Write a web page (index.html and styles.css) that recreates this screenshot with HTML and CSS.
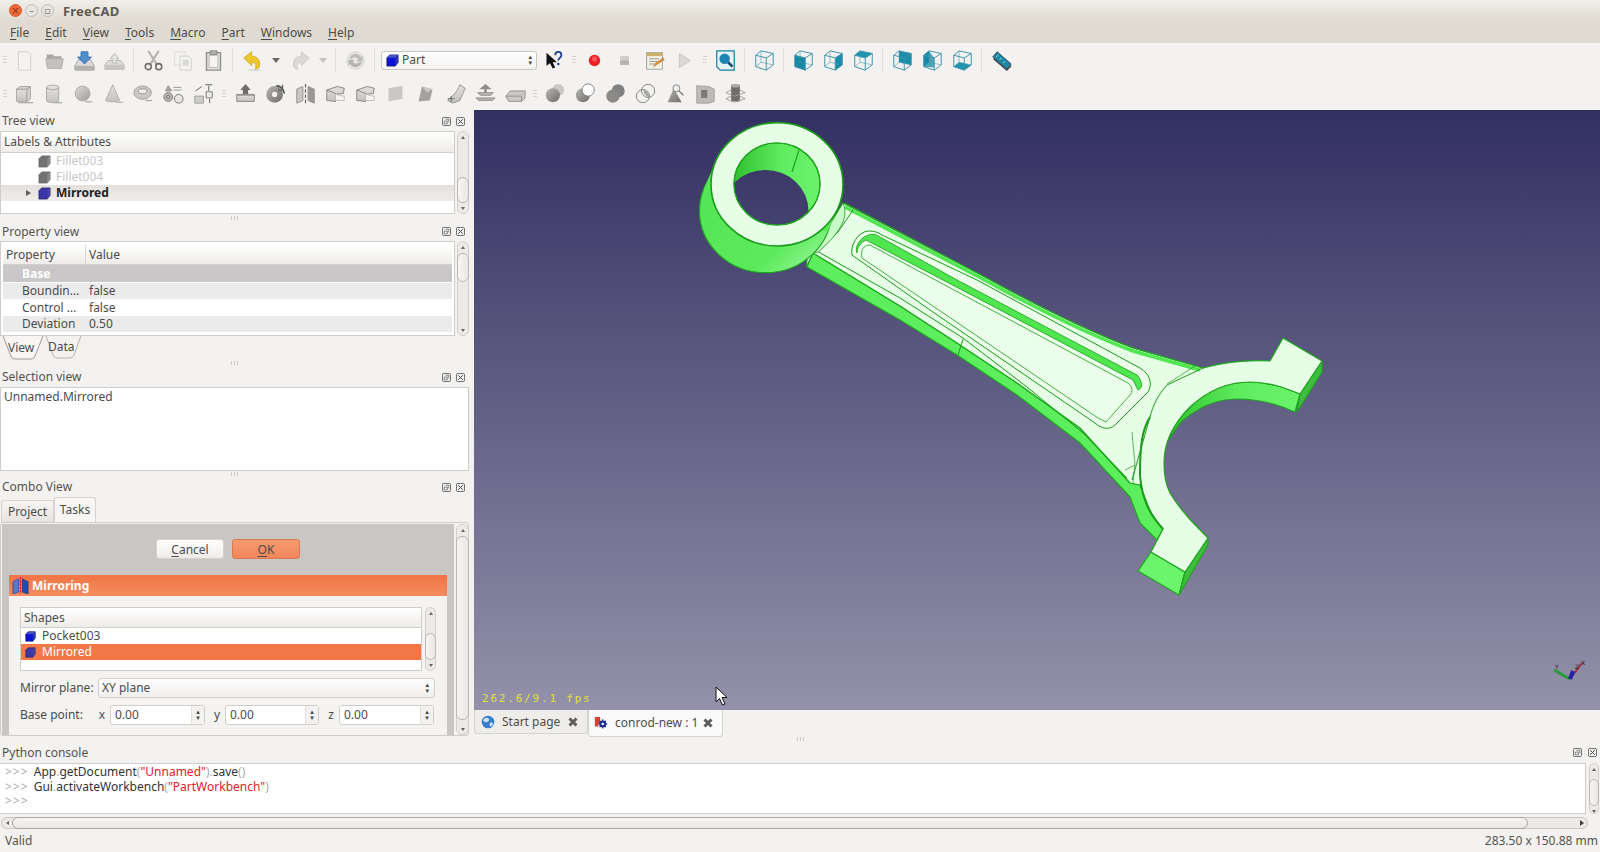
FILE: index.html
```html
<!DOCTYPE html>
<html lang="en">
<head>
<meta charset="utf-8">
<title>FreeCAD</title>
<link rel="stylesheet" href="styles.css">
</head>
<body>
<svg class="defs" aria-hidden="true">
  <defs>
    <linearGradient id="gface" x1="0" y1="0" x2="0" y2="1"><stop offset="0" stop-color="#e2e1de"/><stop offset="1" stop-color="#c3c2bf"/></linearGradient>
    <linearGradient id="gball" x1="0" y1="0" x2="1" y2="1"><stop offset="0" stop-color="#dcdbd8"/><stop offset="1" stop-color="#9e9d9a"/></linearGradient>
    <linearGradient id="gdark" x1="0" y1="0" x2="1" y2="1"><stop offset="0" stop-color="#b5b4b1"/><stop offset="1" stop-color="#6f6e6c"/></linearGradient>
    <symbol id="new" viewBox="0 0 24 24"><path d="M5 2h11l3 3v18H5z" fill="#f4f3f1" stroke="#cfcecb"/></symbol>
    <symbol id="open" viewBox="0 0 24 24"><path d="M3 5h7l2 2h8v3H3z" fill="#a9a8a5"/><path d="M2 10h20l-2 11H4z" fill="#c3c2bf" stroke="#adaca9"/></symbol>
    <symbol id="save" viewBox="0 0 24 24"><path d="M5 11h14l4 7v5H1v-5z" fill="#dcdbd8" stroke="#9f9e9b"/><path d="M1 18h22v5H1z" fill="#b3b2af"/><path d="M8 2h8v6h4l-8 8-8-8h4z" fill="#4f8dcc" stroke="#3a70ac"/></symbol>
    <symbol id="saveas" viewBox="0 0 24 24"><path d="M5 12h14l4 5v5H1v-5z" fill="#dddcd9" stroke="#b3b2af"/><path d="M2 17h20v5H2z" fill="#c7c6c3"/><path d="M12 4l5 6h-3v5h-4v-5H7z" fill="#e8e7e4" stroke="#b3b2af"/></symbol>
    <symbol id="cut" viewBox="0 0 24 24"><path d="M6 1l10 16M18 1L8 17" stroke="#b5b4b1" stroke-width="2.400" fill="none"/><circle cx="6" cy="19" r="3.400" fill="none" stroke="#6f6e6c" stroke-width="1.800"/><circle cx="18" cy="19" r="3.400" fill="none" stroke="#6f6e6c" stroke-width="1.800"/></symbol>
    <symbol id="copy" viewBox="0 0 24 24"><path d="M2 2h12v15H2z" fill="#f3f2f0" stroke="#dad9d6"/><path d="M8 7h10l3 3v13H8z" fill="#f3f2f0" stroke="#cfcecb"/><path d="M11 11h7v7h-7z" fill="#d9d8d5"/></symbol>
    <symbol id="paste" viewBox="0 0 24 24"><path d="M4 3h16v20H4z" fill="#e3e2df" stroke="#8f8e8b" stroke-width="1.600"/><path d="M7 6h10v14H7z" fill="#f6f5f3" stroke="#b5b4b1"/><path d="M8 1h8v4H8z" fill="#b5b4b1" stroke="#7f7e7b"/></symbol>
    <symbol id="undo" viewBox="0 0 24 24"><path d="M2 9l9-7v5c7 0 10 5 9 12-1 2-3 3-5 3 2-4 1-8-4-8v4z" fill="#ecc82f" stroke="#d4a91a"/><ellipse cx="14" cy="23" rx="8" ry="1" fill="#d6d5d2"/></symbol>
    <symbol id="redo" viewBox="0 0 24 24"><path d="M22 9l-9-7v5C6 7 3 12 4 19c1 2 3 3 5 3-2-4-1-8 4-8v4z" fill="#dad9d6" stroke="#cbcac7"/></symbol>
    <symbol id="refresh" viewBox="0 0 24 24"><circle cx="12" cy="12" r="10" fill="#e9e8e5" stroke="#d4d3d0"/><path d="M5 10a7 7 0 0 1 13-2l2-2v7h-7l2-2a4 4 0 0 0-7-1z" fill="#bdbcb9"/><path d="M19 14a7 7 0 0 1-13 2l-2 2v-7h7l-2 2a4 4 0 0 0 7 1z" fill="#b5b4b1"/></symbol>
    <symbol id="what" viewBox="0 0 24 24"><path d="M4 3v15l4-3 3 6 3-1-3-6h5z" fill="#111"/><path d="M14 6c0-5 7-5 7 0 0 3-3.500 3-3.500 6" fill="none" stroke="#1c3d8f" stroke-width="2"/><circle cx="17.500" cy="16" r="1.400" fill="#1c3d8f"/></symbol>
    <symbol id="rec" viewBox="0 0 24 24"><circle cx="12" cy="12" r="6.500" fill="#ec2027"/><circle cx="12" cy="10" r="3" fill="#f55"/></symbol>
    <symbol id="stop" viewBox="0 0 24 24"><path d="M7 7h10v10H7z" fill="#cfcecb"/><path d="M7 12h10v5H7z" fill="#b5b4b1"/></symbol>
    <symbol id="macro" viewBox="0 0 24 24"><path d="M3 3h18v19H3z" fill="#f3f1e6" stroke="#9a9995"/><path d="M3 3h18v4H3z" fill="#c9b26a"/><path d="M6 10h11M6 13h9M6 16h6" stroke="#8f8e8b"/><path d="M11 19l2-4 9-6 1 2-9 6z" fill="#e09530" stroke="#a66a1d" stroke-width=".6"/></symbol>
    <symbol id="play" viewBox="0 0 24 24"><path d="M6 4l13 8-13 8z" fill="#d9d8d5" stroke="#c6c5c2"/></symbol>
    <symbol id="fit" viewBox="0 0 24 24"><path d="M2 1h20v22H6l-4-4z" fill="#e8f3f6" stroke="#1a7f9c" stroke-width="1.400"/><circle cx="11" cy="10" r="6" fill="#1d86b3"/><path d="M15 14l5 5" stroke="#17506e" stroke-width="3"/></symbol>
    <symbol id="wire" viewBox="0 0 24 24"><path d="M2 6L8 1 22 4V17L14 23 2 19ZM2 6L14 9 22 4M14 9V23" fill="none" stroke="#3f93a9" stroke-width="1.100"/><path d="M8 1V14L2 19M8 14L22 17" fill="none" stroke="#3f93a9" stroke-width=".6"/></symbol>
    <symbol id="viso" viewBox="0 0 24 24"><use href="#wire"/></symbol>
    <symbol id="vfront" viewBox="0 0 24 24"><path d="M2 6L14 9V23L2 19Z" fill="#1688a6"/><use href="#wire"/></symbol>
    <symbol id="vright" viewBox="0 0 24 24"><path d="M14 9L22 4V17L14 23Z" fill="#1c8eab"/><use href="#wire"/></symbol>
    <symbol id="vtop" viewBox="0 0 24 24"><path d="M2 6L8 1 22 4 14 9Z" fill="#1f95b2"/><use href="#wire"/></symbol>
    <symbol id="vrear" viewBox="0 0 24 24"><path d="M8 1L22 4V17L8 14Z" fill="#1c8eab"/><use href="#wire"/></symbol>
    <symbol id="vleft" viewBox="0 0 24 24"><path d="M2 6L8 1V14L2 19Z" fill="#1688a6"/><path d="M2 6L8 1 14 9V20L2 19Z" fill="#1688a6" opacity=".75"/><use href="#wire"/></symbol>
    <symbol id="vbottom" viewBox="0 0 24 24"><path d="M2 19L8 14 22 17 14 23Z" fill="#1f95b2"/><use href="#wire"/></symbol>
    <symbol id="measure" viewBox="0 0 24 24"><path d="M2 8l5-6 16 14-5 6z" fill="#1d87a6" stroke="#2a4450"/><path d="M6 8l2-2M10 11l2-2M14 15l2-2" stroke="#cfeaf2"/><path d="M3 10l15 13 5-5" fill="none" stroke="#3a3f42" stroke-width="1.400"/></symbol>
    <symbol id="pbox" viewBox="0 0 24 24"><path d="M4 7h12v14H4z" fill="url(#gface)" stroke="#a5a4a1"/><path d="M4 7l4-3h12l-4 3zM16 7l4-3v14l-4 3z" fill="#d2d1ce" stroke="#a5a4a1"/><path d="M6 22.500h17" stroke="#a9a8a5" stroke-width="1.400"/></symbol>
    <symbol id="pcyl" viewBox="0 0 24 24"><path d="M4 5v15c0 3 14 3 14 0V5z" fill="url(#gface)" stroke="#a5a4a1"/><ellipse cx="11" cy="5" rx="7" ry="2.500" fill="#e2e1de" stroke="#a5a4a1"/><path d="M12 22.500h10" stroke="#a9a8a5" stroke-width="1.400"/></symbol>
    <symbol id="psph" viewBox="0 0 24 24"><circle cx="11" cy="12" r="8.500" fill="url(#gball)" stroke="#a9a8a5"/><path d="M14 21.500h8" stroke="#a9a8a5" stroke-width="1.400"/></symbol>
    <symbol id="pcone" viewBox="0 0 24 24"><path d="M11 2L3 20c2 2 14 2 16 0z" fill="url(#gface)" stroke="#a9a8a5"/><path d="M15 22h8" stroke="#b5b4b1" stroke-width="1.400"/></symbol>
    <symbol id="ptor" viewBox="0 0 24 24"><ellipse cx="11" cy="11" rx="10" ry="7.500" fill="#c9c8c5" stroke="#9a9996"/><ellipse cx="11" cy="9.500" rx="5" ry="2.800" fill="#eeedea" stroke="#8f8e8b"/><path d="M14 20h8" stroke="#a9a8a5" stroke-width="1.400"/></symbol>
    <symbol id="pprim" viewBox="0 0 24 24"><circle cx="6" cy="16" r="5" fill="#bdbcb9" stroke="#6f6e6c"/><circle cx="6" cy="16" r="2" fill="none" stroke="#6f6e6c"/><circle cx="18" cy="18" r="5" fill="#e6e5e2" stroke="#6f6e6c"/><path d="M6 3l-3 6h7zM12 5h9M12 8h9" fill="#a9a8a5" stroke="#8f8e8b"/></symbol>
    <symbol id="pbuild" viewBox="0 0 24 24"><path d="M2 15h10v8H2z" fill="#cfcecb" stroke="#9a9996"/><path d="M15 10h7v7h-7z" fill="#eeedea" stroke="#6f6e6c"/><path d="M3 9l7-5M14 2h8M18 3v6M19 18v5" stroke="#555" fill="none"/></symbol>
    <symbol id="pext" viewBox="0 0 24 24"><path d="M12 1l6 7h-3v5H9V8H6z" fill="#6f6e6c"/><path d="M2 13h20v8H2z" fill="url(#gface)" stroke="#7f7e7b"/><path d="M1 14h22" stroke="#8f8e8b"/></symbol>
    <symbol id="prev" viewBox="0 0 24 24"><circle cx="11" cy="13" r="9.500" fill="url(#gdark)"/><circle cx="11" cy="13" r="3" fill="#f3f2f0"/><path d="M13 3a10 10 0 0 1 9 9" fill="none" stroke="#555" stroke-width="2"/><path d="M20 2v6h-5" fill="none" stroke="#555" stroke-width="1.400"/></symbol>
    <symbol id="pmir" viewBox="0 0 24 24"><path d="M2 7l7-3v16l-7 3z" fill="#c9c8c5" stroke="#8f8e8b"/><path d="M22 7l-7-3v16l7 3z" fill="#9a9996" stroke="#8f8e8b"/><path d="M12 1v23" stroke="#6f6e6c" stroke-dasharray="4 2" stroke-width="1.400"/></symbol>
    <symbol id="pfil" viewBox="0 0 24 24"><path d="M2 8l12-4 8 2-1 6-9 1v8L2 20z" fill="url(#gface)" stroke="#7f7e7b"/><path d="M2 8l10 4v9" fill="none" stroke="#7f7e7b"/><path d="M12 13c3 0 6 2 10 2v5H12z" fill="#f3f2f0" stroke="#bdbcb9"/></symbol>
    <symbol id="pface" viewBox="0 0 24 24"><path d="M4 6l16-3v15L4 21z" fill="#c9c8c5"/></symbol>
    <symbol id="pface2" viewBox="0 0 24 24"><path d="M8 4l12 3-3 13-13 1z" fill="#a3a2a0"/><path d="M8 4l12 3-6 4z" fill="#cbcac7"/></symbol>
    <symbol id="psweep" viewBox="0 0 24 24"><path d="M17 2l6 4-6 14-8 3-6-3 6-6c4-3 6-7 8-12z" fill="url(#gface)" stroke="#8f8e8b"/><path d="M3 18h8M7 15v7" stroke="#666"/></symbol>
    <symbol id="ploft" viewBox="0 0 24 24"><path d="M12 1l7 6H5z" fill="#8f8e8b"/><path d="M3 11h18l-3 3H6zM1 17h22l-3 3H4z" fill="#b5b4b1" stroke="#8f8e8b"/><path d="M12 7v4" stroke="#8f8e8b" stroke-width="3"/></symbol>
    <symbol id="pcube2" viewBox="0 0 24 24"><path d="M1 15l5-6h17v8l-4 4H4z" fill="#c9c8c5" stroke="#8f8e8b"/><path d="M1 15h18v6" fill="none" stroke="#8f8e8b"/></symbol>
    <symbol id="bcut" viewBox="0 0 24 24"><circle cx="15" cy="8" r="7" fill="#c9c8c5"/><circle cx="9" cy="14" r="8" fill="url(#gdark)"/></symbol>
    <symbol id="bfuse" viewBox="0 0 24 24"><circle cx="9" cy="14" r="8" fill="url(#gdark)"/><circle cx="15" cy="8" r="7" fill="#fff" stroke="#777"/></symbol>
    <symbol id="bcom" viewBox="0 0 24 24"><circle cx="15" cy="9" r="7.500" fill="#818080"/><circle cx="9" cy="15" r="7.500" fill="#8b8a88"/></symbol>
    <symbol id="bint" viewBox="0 0 24 24"><circle cx="15" cy="9" r="7.500" fill="none" stroke="#777"/><circle cx="9" cy="15" r="7.500" fill="none" stroke="#777"/><path d="M10 7.500a7.500 7.500 0 0 1 6 9 7.500 7.500 0 0 1-6-9z" fill="#a9a8a5"/></symbol>
    <symbol id="bsec" viewBox="0 0 24 24"><path d="M10 6L3 22h16z" fill="url(#gdark)"/><circle cx="13" cy="6" r="4" fill="#eee" stroke="#777"/><path d="M16 9l5 5" stroke="#777" stroke-width="1.500"/></symbol>
    <symbol id="bthick" viewBox="0 0 24 24"><path d="M2 3l14 1 6 3v14l-6 2H2z" fill="#bdbcb9" stroke="#a09f9c"/><path d="M7 8h7v9H7z" fill="#7a7977"/></symbol>
    <symbol id="bstack" viewBox="0 0 24 24"><path d="M7 2h10v19H7z" fill="#6f6e6c"/><ellipse cx="12" cy="3" rx="5" ry="2" fill="#a9a8a5"/><path d="M1 11l6-3M23 11l-6-3M1 18l6-3M23 18l-6-3M1 11l10 4 12-4M1 18l10 4 12-4" stroke="#9a9996" fill="none"/></symbol>
    <symbol id="cubeblue" viewBox="0 0 14 14"><path d="M1 4l3-3h9v8l-3 4H1z" fill="#0c13d4" stroke="#071067" stroke-width=".8"/><path d="M10 4l3-3v8l-3 4z" fill="#2b33ae"/><path d="M1 4l3-3h9l-3 3z" fill="#4552c6"/></symbol>
    <symbol id="cubepurple" viewBox="0 0 14 14"><path d="M1 4l3-3h9v8l-3 4H1z" fill="#3b35a8" stroke="#28255f" stroke-width=".8"/><path d="M10 4l3-3v8l-3 4z" fill="#4a45a0"/></symbol>
    <symbol id="cubegrey" viewBox="0 0 14 14"><path d="M1 4l3-3h9v8l-3 4H1z" fill="#737373" stroke="#666" stroke-width=".8"/><path d="M10 4l3-3v8l-3 4z" fill="#8a8a8a"/></symbol>
    <symbol id="float" viewBox="0 0 10 10"><rect x=".5" y=".5" width="9" height="9" rx="1.500" fill="none" stroke="#5e5e5e"/><path d="M4 2.500h3.500V6M2.500 4.500h3.500v3h-3.500z" fill="none" stroke="#5e5e5e" stroke-width=".8"/></symbol>
    <symbol id="closex" viewBox="0 0 10 10"><rect x=".5" y=".5" width="9" height="9" rx="1.500" fill="none" stroke="#5e5e5e"/><path d="M2.500 2.500l5 5M7.500 2.500l-5 5" stroke="#444" stroke-width="1.100"/></symbol>
    <symbol id="tabx" viewBox="0 0 12 12"><path d="M2.500 2.500l7 7M9.500 2.500l-7 7" stroke="#5e5d5b" stroke-width="3"/></symbol>
    <symbol id="globe" viewBox="0 0 14 14"><circle cx="7" cy="7" r="6.300" fill="#3a7ecb"/><path d="M3 4c2-2 4-1 5 0S6 8 4 7 2 5 3 4zM9 8c2-1 3 0 3 1s-2 3-3 2 0-2 0-3z" fill="#cfe3f7"/></symbol>
    <symbol id="docgear" viewBox="0 0 16 16"><path d="M1 1h6v7H5v4H1z" fill="#d9412a"/><circle cx="10" cy="9" r="4" fill="#1b2f8f"/><circle cx="10" cy="9" r="1.400" fill="#fff"/><path d="M10 3.800v2M10 12.200v2M4.800 9h2M13.200 9h2M6.400 5.400l1.400 1.400M12.200 11.200l1.400 1.400M13.600 5.400l-1.400 1.400M7.800 11.200l-1.400 1.400" stroke="#1b2f8f" stroke-width="1.300"/></symbol>
    <symbol id="mirrorblue" viewBox="0 0 18 18"><path d="M1 5l6-3v14l-6 2z" fill="#4d7fd6" stroke="#1f3f8f" stroke-width=".7"/><path d="M17 5l-6-3v14l6 2z" fill="#1c4fae" stroke="#13306f" stroke-width=".7"/><path d="M9 0v18" stroke="#e11" stroke-dasharray="2.500 1" stroke-width="1.200"/></symbol>
  </defs>
</svg>

<header class="titlebar">
  <div class="winbtns">
    <span class="winbtn close">×</span>
    <span class="winbtn">–</span>
    <span class="winbtn">▫</span>
  </div>
  <span class="apptitle">FreeCAD</span>
</header>

<nav class="menubar">
  <span><u>F</u>ile</span><span><u>E</u>dit</span><span><u>V</u>iew</span><span><u>T</u>ools</span><span><u>M</u>acro</span><span><u>P</u>art</span><span><u>W</u>indows</span><span><u>H</u>elp</span>
</nav>

<div class="toolbar">
  <i class="grip g9"></i>
  <span class="tb"><svg class="ic"><use href="#new"/></svg></span>
  <span class="tb"><svg class="ic"><use href="#open"/></svg></span>
  <span class="tb"><svg class="ic"><use href="#save"/></svg></span>
  <span class="tb"><svg class="ic"><use href="#saveas"/></svg></span>
  <i class="sep"></i>
  <span class="tb"><svg class="ic"><use href="#cut"/></svg></span>
  <span class="tb"><svg class="ic"><use href="#copy"/></svg></span>
  <span class="tb"><svg class="ic"><use href="#paste"/></svg></span>
  <i class="sep"></i>
  <span class="tb"><svg class="ic"><use href="#undo"/></svg></span>
  <span class="drop d18"></span>
  <span class="tb"><svg class="ic"><use href="#redo"/></svg></span>
  <span class="drop faint"></span>
  <i class="sep"></i>
  <span class="tb"><svg class="ic"><use href="#refresh"/></svg></span>
  <i class="sep"></i>
  <div class="wbcombo"><svg class="cube"><use href="#cubeblue"/></svg><span>Part</span><span class="updown">▴<br>▾</span></div>
  <span class="tb"><svg class="ic"><use href="#what"/></svg></span>
  <i class="grip g11"></i>
  <span class="tb"><svg class="ic"><use href="#rec"/></svg></span>
  <span class="tb"><svg class="ic"><use href="#stop"/></svg></span>
  <span class="tb"><svg class="ic"><use href="#macro"/></svg></span>
  <span class="tb"><svg class="ic"><use href="#play"/></svg></span>
  <i class="grip g11"></i>
  <span class="tb"><svg class="ic"><use href="#fit"/></svg></span>
  <i class="sep"></i>
  <span class="tb"><svg class="ic"><use href="#viso"/></svg></span>
  <i class="sep"></i>
  <span class="tb"><svg class="ic"><use href="#vfront"/></svg></span>
  <span class="tb"><svg class="ic"><use href="#vright"/></svg></span>
  <span class="tb"><svg class="ic"><use href="#vtop"/></svg></span>
  <i class="sep"></i>
  <span class="tb"><svg class="ic"><use href="#vrear"/></svg></span>
  <span class="tb"><svg class="ic"><use href="#vleft"/></svg></span>
  <span class="tb"><svg class="ic"><use href="#vbottom"/></svg></span>
  <i class="sep"></i>
  <span class="tb"><svg class="ic"><use href="#measure"/></svg></span>
</div>

<div class="toolbar second">
  <i class="grip g8"></i>
  <span class="tb"><svg class="ic"><use href="#pbox"/></svg></span>
  <span class="tb"><svg class="ic"><use href="#pcyl"/></svg></span>
  <span class="tb"><svg class="ic"><use href="#psph"/></svg></span>
  <span class="tb"><svg class="ic"><use href="#pcone"/></svg></span>
  <span class="tb"><svg class="ic"><use href="#ptor"/></svg></span>
  <span class="tb"><svg class="ic"><use href="#pprim"/></svg></span>
  <span class="tb"><svg class="ic"><use href="#pbuild"/></svg></span>
  <i class="grip g12"></i>
  <span class="tb"><svg class="ic"><use href="#pext"/></svg></span>
  <span class="tb"><svg class="ic"><use href="#prev"/></svg></span>
  <span class="tb"><svg class="ic"><use href="#pmir"/></svg></span>
  <span class="tb"><svg class="ic"><use href="#pfil"/></svg></span>
  <span class="tb"><svg class="ic"><use href="#pfil"/></svg></span>
  <span class="tb"><svg class="ic"><use href="#pface"/></svg></span>
  <span class="tb"><svg class="ic"><use href="#pface2"/></svg></span>
  <span class="tb"><svg class="ic"><use href="#psweep"/></svg></span>
  <span class="tb"><svg class="ic"><use href="#ploft"/></svg></span>
  <span class="tb"><svg class="ic"><use href="#pcube2"/></svg></span>
  <i class="grip g10"></i>
  <span class="tb"><svg class="ic"><use href="#bcut"/></svg></span>
  <span class="tb"><svg class="ic"><use href="#bfuse"/></svg></span>
  <span class="tb"><svg class="ic"><use href="#bcom"/></svg></span>
  <span class="tb"><svg class="ic"><use href="#bint"/></svg></span>
  <span class="tb"><svg class="ic"><use href="#bsec"/></svg></span>
  <span class="tb"><svg class="ic"><use href="#bthick"/></svg></span>
  <span class="tb"><svg class="ic"><use href="#bstack"/></svg></span>
</div>

<main class="workspace">
  <aside class="dock">
    <div class="docktitle"><span>Tree view</span><span class="dockbtns"><svg><use href="#float"/></svg><svg><use href="#closex"/></svg></span></div>
    <section class="treepane">
      <div class="box tree">
        <div class="hdr">Labels &amp; Attributes</div>
        <div class="trow muted indent"><svg class="cube"><use href="#cubegrey"/></svg>Fillet003</div>
        <div class="trow muted indent"><svg class="cube"><use href="#cubegrey"/></svg>Fillet004</div>
        <div class="trow sel indent"><i class="arrow"></i><svg class="cube"><use href="#cubepurple"/></svg>Mirrored</div>
      </div>
      <div class="vscroll"><b class="up"></b><i class="thumb t-tree"></i><b class="dn"></b></div>
    </section>
    <div class="splitter"><i></i></div>

    <div class="docktitle t2"><span>Property view</span><span class="dockbtns"><svg><use href="#float"/></svg><svg><use href="#closex"/></svg></span></div>
    <section class="proppane">
      <div class="box prop">
        <div class="phdr"><span class="pc1">Property</span><span class="pc2">Value</span></div>
        <div class="prow group"><span class="pc1">Base</span></div>
        <div class="prow alt"><span class="pc1">Boundin…</span><span class="pc2">false</span></div>
        <div class="prow"><span class="pc1">Control …</span><span class="pc2">false</span></div>
        <div class="prow alt"><span class="pc1">Deviation</span><span class="pc2">0.50</span></div>
      </div>
      <div class="vscroll"><b class="up"></b><i class="thumb t-prop"></i><b class="dn"></b></div>
    </section>
    <svg class="triatabs" viewBox="0 0 90 24">
      <path d="M1 0L9 20q1 3 4 3h16q3 0 4-3L41 0" fill="#f7f6f4" stroke="#9f9d98"/>
      <path d="M44 0L51 19q1 3 4 3h13q3 0 4-3L79 0" fill="none" stroke="#b5b3ae"/>
      <text x="6" y="16">View</text><text x="46" y="15">Data</text>
    </svg>
    <div class="splitter s6"><i></i></div>

    <div class="docktitle"><span>Selection view</span><span class="dockbtns"><svg><use href="#float"/></svg><svg><use href="#closex"/></svg></span></div>
    <section class="box selpane">Unnamed.Mirrored</section>
    <div class="splitter s5"><i></i></div>

    <div class="docktitle"><span>Combo View</span><span class="dockbtns"><svg><use href="#float"/></svg><svg><use href="#closex"/></svg></span></div>
    <div class="qtabs"><span class="qtab">Project</span><span class="qtab on">Tasks</span></div>
    <section class="tasks">
      <div class="taskgrey">
        <div class="btnrow"><span class="btn"><u>C</u>ancel</span><span class="btn ok"><u>O</u>K</span></div>
        <div class="taskhead"><svg class="mirico"><use href="#mirrorblue"/></svg>Mirroring</div>
        <div class="taskbody">
          <div class="shapes">
            <div class="box shapelist">
              <div class="hdr slim">Shapes</div>
              <div class="srow"><svg class="cube"><use href="#cubeblue"/></svg>Pocket003</div>
              <div class="srow picked"><svg class="cube"><use href="#cubepurple"/></svg>Mirrored</div>
            </div>
            <div class="vscroll small"><b class="up"></b><i class="thumb t-shape"></i><b class="dn"></b></div>
          </div>
          <div class="formrow r1"><label class="lab">Mirror plane:</label><div class="combo"><span>XY plane</span><span class="updown">▴<br>▾</span></div></div>
          <div class="formrow r2">
            <label class="lab bp">Base point:</label>
            <label class="axis">x</label><div class="spin w95"><span>0.00</span><span class="spinb">▴<br>▾</span></div>
            <label class="axis">y</label><div class="spin w94"><span>0.00</span><span class="spinb">▴<br>▾</span></div>
            <label class="axis">z</label><div class="spin w95"><span>0.00</span><span class="spinb">▴<br>▾</span></div>
          </div>
        </div>
      </div>
      <div class="vscroll tall"><b class="up"></b><i class="thumb t-task"></i><b class="dn"></b></div>
    </section>
  </aside>

  <div class="center">
    <div class="viewport">
      <svg class="scene" viewBox="474 110 1126 600" role="img" aria-label="Connecting rod 3D model">
        <defs>
          <linearGradient id="bg" gradientUnits="userSpaceOnUse" x1="0" y1="110" x2="0" y2="710"><stop offset="0" stop-color="#322f62"/><stop offset="1" stop-color="#9491aa"/></linearGradient>
          <linearGradient id="side" x1="0" y1="0" x2="1" y2="1"><stop offset="0" stop-color="#50e450"/><stop offset=".7" stop-color="#5cea5c"/><stop offset="1" stop-color="#a8f8a8"/></linearGradient>
          <linearGradient id="wall" x1="0" y1="0" x2="1" y2="0"><stop offset="0" stop-color="#2fc02f"/><stop offset=".55" stop-color="#5fec5f"/><stop offset="1" stop-color="#6cf26c"/></linearGradient>
          <clipPath id="holeclip"><ellipse cx="777" cy="184" rx="43" ry="41"/></clipPath>
        </defs>
        <rect x="474" y="110" width="1126" height="600" fill="url(#bg)"/>
        <g stroke="#1fa51f" stroke-width="1.200" stroke-linejoin="round">
          <path d="M807 267L900 320 957 355 1017 395 1080 443 1130 497 1140 523 1157 540 1163 529 1147 503 1140 485 1130 483 1080 428 1017 383 957 343 900 306 813 253Z" fill="#5cee5c"/>
          <path d="M1300 394C1285 388 1270 382 1250 382 1225 382 1205 393 1190 407 1175 422 1166 437 1166 443L1180 423C1200 405 1220 399 1237 399 1260 399 1280 405 1295 412Z" fill="url(#wall)"/>
          <path d="M1151 552L1138 571 1179 595 1185 572Z" fill="#6cf56c"/>
          <path d="M1185 572L1179 595 1208 545 1208 538Z" fill="#3dbd3d"/>
          <path d="M1300 394L1297 412 1322 372 1322 361Z" fill="#3dbd3d"/>
          <path d="M843 203L983 276C1030 302 1090 332 1133 348L1203 368C1225 362 1250 360 1270 361L1283 338 1322 361 1300 394C1285 388 1270 382 1250 382 1225 382 1205 393 1190 407 1175 422 1164 440 1164 463 1164 475 1166 485 1170 493 1180 510 1195 525 1208 538L1185 572 1151 552 1163 529C1155 520 1150 512 1147 503L1140 485 1130 483 1080 428 1017 383 957 343 900 306 813 253Z" fill="#e6fde6"/>
        </g>
        <path d="M845 207L983 279C1030 305 1090 335 1133 351L1200 370" fill="none" stroke="#4fe64f" stroke-width="3.500"/>
        <path d="M845 203L983 276C1030 302 1090 332 1133 348L1203 368" fill="none" stroke="#1fa51f"/>
        <g fill="none" stroke="#1c9c1c" stroke-width="1">
          <path d="M815 250L900 298 963 338 1027 387 1083 433 1127 478"/>
          <path d="M963 339L958 355"/>
          <path d="M1203 368L1167 385C1158 395 1153 405 1150 417L1132 480"/>
          <path d="M1125 470L1135 465 1133 483M1135 465L1132 432" stroke-width=".7"/>
          <path d="M1167 384L1195 366" stroke-width=".7"/>
        </g>
        <path d="M1150 417C1142 430 1140 445 1140 475 1142 500 1150 515 1163 529" fill="none" stroke="#1b9a1b" stroke-width="2"/>
        <path d="M852 255C850 245 858 232 868 231 874 231 878 232 882 235L977 280 1140 368C1150 374 1153 384 1148 392L1115 425C1108 431 1101 428 1095 423L930 310Z" fill="#eafeea" stroke="#1c9c1c"/>
        <path d="M880 237L957 280 1137 375C1143 382 1143 388 1138 390L1133 380 943 280 866 240C860 243 857 248 857 253 853 244 868 228 880 237Z" fill="#4fe64f" stroke="#1c9c1c" stroke-width=".8"/>
        <path d="M862 258C860 250 864 245 870 245L1128 383C1133 387 1133 392 1130 395L1106 422 1098 418Z" fill="#eafeea" stroke="#1c9c1c" stroke-width=".8"/>
        <path d="M853 210L838 232 820 250" fill="none" stroke="#1c9c1c"/>
        <path d="M843 203C850 218 838 235 818 252L808 254 806 267 813 253Z" fill="#c9fac9" stroke="#1c9c1c" stroke-width=".8"/>

        <g stroke="#1fa51f" stroke-width="1.200">
          <ellipse cx="765.500" cy="211" rx="66" ry="61.700" fill="url(#side)"/>
          <path d="M715 163L703.500 190 827.500 232 839 205Z" fill="#54e854" stroke="none"/>
          <ellipse cx="777" cy="184.300" rx="66" ry="61.700" fill="#e6fde6" stroke="#1b9a1b" stroke-width="1.600"/>
          <ellipse cx="777" cy="184" rx="43" ry="41" fill="url(#wall)"/>
          <ellipse cx="765.500" cy="211" rx="43" ry="41" fill="url(#bg)" stroke="none" clip-path="url(#holeclip)"/>
          <ellipse cx="777" cy="184" rx="43" ry="41" fill="none"/>
          <path d="M799 150L792 172" fill="none"/>
        </g>

        <text class="fps" x="482" y="702">262.6/9.1 fps</text>
        <path d="M1570 679L1554 670" stroke="#2c9a3c" stroke-width="3"/>
        <path d="M1570 679L1582 663" stroke="#a03040" stroke-width="2"/>
        <path d="M1570 679L1573 671" stroke="#2222a8" stroke-width="4"/>
        <text class="axlab" x="1555" y="669">Y</text><text class="axlab" x="1575" y="669">Z</text><text class="axlab" x="1581" y="665">X</text>
        <path d="M716 687v15l3.500-3.500 3 6.500 2.500-1-3-6.500h5z" fill="#fff" stroke="#111"/>
      </svg>
    </div>
    <div class="doctabs">
      <span class="dtab"><svg class="tabic"><use href="#globe"/></svg><span class="dname">Start page</span><svg class="tabx"><use href="#tabx"/></svg></span>
      <span class="dtab on"><svg class="tabic"><use href="#docgear"/></svg><span class="dname">conrod-new : 1</span><svg class="tabx"><use href="#tabx"/></svg></span>
    </div>
  </div>
</main>

<section class="console">
  <div class="splitter hs"><i></i></div>
  <div class="docktitle wide"><span>Python console</span><span class="dockbtns"><svg><use href="#float"/></svg><svg><use href="#closex"/></svg></span></div>
  <div class="conbody">
    <div class="conrows">
      <div class="con"><i>&gt;&gt;&gt;</i> App<em>.</em>getDocument<em>(</em><b>"Unnamed"</b><em>).</em>save<em>()</em></div>
      <div class="con"><i>&gt;&gt;&gt;</i> Gui<em>.</em>activateWorkbench<em>(</em><b>"PartWorkbench"</b><em>)</em></div>
      <div class="con"><i>&gt;&gt;&gt;</i></div>
    </div>
    <div class="vscroll con-v"><b class="up"></b><i class="thumb t-con"></i><b class="dn"></b></div>
  </div>
  <div class="hscroll"><b class="lf"></b><i class="hthumb"></i><i class="htrack"></i><b class="rt"></b></div>
</section>

<footer class="status"><span>Valid</span><span>283.50 x 150.88 mm</span></footer>
</body>
</html>
```
FILE: styles.css
```css
* { box-sizing: border-box; }
html, body { margin: 0; height: 100%; }
body { width: 1600px; height: 852px; overflow: hidden; display: flex; flex-direction: column; background: #f3f2f0; color: #4c4c4c; font: 12px/16px "Noto Sans", "Open Sans", sans-serif; }
.defs { position: absolute; width: 0; height: 0; }
i, b, em { font-style: normal; }

.titlebar { height: 21px; flex: none; display: flex; align-items: center; background: linear-gradient(#f0eee9, #e0dcd3); }
.winbtns { display: flex; gap: 3px; margin-left: 9px; width: 54px; }
.winbtn { width: 13px; height: 13px; border-radius: 50%; background: #e8e5df; border: 1px solid #c2bfb8; color: #777; font: 10px/11px "DejaVu Sans", sans-serif; text-align: center; }
.winbtn.close { background: #ee6a38; border-color: #d9582a; color: #8c3410; }
.apptitle { margin-left: 0; font-weight: 700; font-size: 13px; color: #5d5a52; letter-spacing: .2px; }

.menubar { height: 22px; flex: none; display: flex; align-items: center; padding: 1px 0 0 10px; gap: 16px; background: #dfdbd2; font-size: 12px; color: #4e4b45; }

.toolbar { height: 34px; flex: none; display: flex; align-items: center; }
.toolbar.second { height: 33px; }
.tb { width: 30px; height: 26px; flex: none; display: flex; align-items: center; justify-content: center; }
.ic { width: 21px; height: 21px; display: block; }
.sep { width: 9px; height: 24px; flex: none; background: linear-gradient(#e2e0dc, #e2e0dc) center / 1px 100% no-repeat; }
.grip { height: 8px; flex: none; background: repeating-linear-gradient(#d6d4d0 0 1px, transparent 1px 3px) center / 4px 100% no-repeat; }
.g8 { width: 9px; margin-right: -1px; } .g9 { width: 9px; } .g10 { width: 10px; } .g11 { width: 11px; } .g12 { width: 12px; }
.drop { width: 16px; flex: none; display: flex; justify-content: center; }
.drop::after { content: ""; border: 4px solid transparent; border-top: 5px solid #6b6a67; border-bottom: 0; }
.drop.faint::after { border-top-color: #c3c2bf; }
.d18 { width: 18px; }
.wbcombo { width: 156px; height: 19px; margin: 0 1px 0 2px; flex: none; display: flex; align-items: center; gap: 3px; padding: 0 4px; background: linear-gradient(#fff, #f3f2f0); border: 1px solid #c9c7c2; border-radius: 3px; }
.wbcombo .updown { margin-left: auto; }
.cube { width: 13px; height: 13px; flex: none; }
.updown, .spinb { font: 7px/6px "DejaVu Sans", sans-serif; color: #444; text-align: center; }

.workspace { height: 627px; flex: none; display: flex; }
.dock { width: 474px; flex: none; display: flex; flex-direction: column; }
.docktitle { height: 21px; flex: none; display: flex; align-items: center; justify-content: space-between; padding: 1px 9px 0 2px; color: #55534f; }
.docktitle.t2 { height: 20px; }
.dockbtns { display: flex; gap: 5px; }
.dockbtns svg { width: 9px; height: 9px; display: block; }
.docktitle.wide { padding-right: 3px; height: 22px; }
.docktitle.wide .dockbtns { gap: 6px; }

.box { background: #fff; border: 1px solid #cfcdc8; }
.treepane { height: 83px; flex: none; display: flex; gap: 2px; padding-right: 5px; }
.tree { flex: 1; }
.hdr { height: 21px; padding-left: 3px; line-height: 20px; background: linear-gradient(#fff, #eeece9); border-bottom: 1px solid #d2d0cb; color: #4f4d49; }
.hdr.slim { height: 20px; }
.trow { height: 16px; display: flex; align-items: center; gap: 5px; }
.indent { padding-left: 37px; }
.trow.muted { color: #c8c8c8; }
.trow.sel { background: linear-gradient(#e4e1dc, #efedea); color: #222; font-weight: 700; position: relative; }
.arrow { position: absolute; left: 25px; top: 5px; border: 3.500px solid transparent; border-left: 5px solid #5f5e5c; border-right: 0; }
.splitter { height: 7px; flex: none; display: flex; align-items: center; justify-content: center; padding-right: 6px; }
.splitter i { width: 7px; height: 4px; background: repeating-linear-gradient(90deg, #cfcdc9 0 1px, transparent 1px 3px); }
.splitter.s6 { height: 6px; }
.splitter.s5 { height: 5px; }
.splitter.hs { height: 4px; padding: 0; }

.vscroll { width: 12px; flex: none; display: flex; flex-direction: column; align-items: stretch; background: #eceae7; border: 1px solid #d2d0cb; border-radius: 6px; }
.vscroll .up, .vscroll .dn { height: 10px; flex: none; display: flex; align-items: center; justify-content: center; }
.vscroll .up::after { content: ""; border: 2px solid transparent; border-bottom: 3px solid #666; border-top: 0; }
.vscroll .dn::after { content: ""; border: 2px solid transparent; border-top: 3px solid #666; border-bottom: 0; }
.thumb { display: block; flex: none; background: linear-gradient(90deg, #f7f6f4, #e9e7e3); border: 1px solid #bab8b3; border-radius: 6px; margin: 0 -1px; }
.t-tree { height: 26px; margin-top: 35px; margin-bottom: auto; }
.t-prop { height: 29px; margin-top: 1px; margin-bottom: auto; }
.t-task { height: 184px; margin-top: 1px; margin-bottom: auto; }
.t-shape { height: 27px; margin-top: 15px; margin-bottom: auto; }
.t-con { height: 27px; margin-top: 5px; margin-bottom: auto; }

.proppane { height: 95px; flex: none; display: flex; gap: 2px; padding-right: 5px; }
.prop { flex: 1; padding: 3px 2px 0; overflow: hidden; }
.phdr { height: 20px; display: flex; align-items: center; background: linear-gradient(#fff, #eeece9); border-bottom: 1px solid #d2d0cb; }
.pc1 { width: 83px; flex: none; padding-left: 3px; }
.pc2 { padding-left: 3px; }
.phdr .pc1 { border-right: 1px solid #d8d6d1; height: 20px; line-height: 20px; }
.prow { height: 16.500px; display: flex; align-items: center; line-height: 15px; border-bottom: 1px solid #fff; }
.prow .pc1 { padding-left: 19px; }
.prow.group { background: #c9c7c7; color: #fff; font-weight: 700; height: 18px; }
.prow.alt { background: #ebebeb; }
.triatabs { width: 90px; height: 24px; flex: none; margin-left: 2px; display: block; }
.triatabs text { font: 12px "Noto Sans", sans-serif; fill: #4c4c4c; }

.selpane { height: 84px; flex: none; margin-right: 5px; padding: 0 3px; line-height: 17px; }
.qtabs { height: 25px; flex: none; display: flex; align-items: flex-end; padding-left: 1px; margin-right: 5px; }
.qtab { height: 22px; width: 53px; text-align: center; line-height: 21px; background: linear-gradient(#f6f5f3, #e6e4e0); border: 1px solid #d5d3ce; border-bottom: 0; border-radius: 3px 0 0 0; }
.qtab.on { height: 25px; width: 42px; line-height: 24px; background: #f7f6f4; border-radius: 3px 3px 0 0; }
.tasks { height: 214px; flex: none; margin-right: 5px; display: flex; gap: 2px; padding: 1px 0 0 1px; border: 1px solid #cfcdc8; border-radius: 3px; }
.tasks .taskgrey { flex: 1; background: #c9c6c3; padding-top: 15px; display: flex; flex-direction: column; overflow: hidden; }
.vscroll.tall { width: 13px; margin-right: -1px; }
.btnrow { display: flex; gap: 8px; padding-left: 154px; height: 36px; flex: none; }
.btn { width: 68px; height: 20px; text-align: center; line-height: 19px; background: linear-gradient(#fff, #eeece9); border: 1px solid #d5d3ce; border-radius: 3px; }
.btn.ok { background: linear-gradient(#f79a70, #f0855a); border-color: #d77b52; }
.taskhead { height: 21px; flex: none; margin: 0 7px; display: flex; align-items: center; gap: 3px; padding-left: 3px; background: linear-gradient(#f07443, #f58d60); color: #fff; font-weight: 700; }
.mirico { width: 17px; height: 17px; }
.taskbody { flex: 1; margin: 0 7px; background: #f4f3f1; padding: 11px 0 0 11px; }
.shapes { display: flex; gap: 3px; height: 64px; }
.shapelist { width: 402px; }
.srow { height: 16px; display: flex; align-items: center; gap: 6px; padding-left: 4px; }
.srow .cube { width: 11px; height: 11px; }
.srow.picked { background: #f2784a; color: #fff; }
.vscroll.small { width: 11px; }
.formrow { display: flex; align-items: center; }
.r1 { height: 20px; margin-top: 7px; }
.r2 { height: 20px; margin-top: 7px; }
.lab { width: 78px; flex: none; }
.bp { width: 75px; }
.combo { width: 337px; height: 20px; display: flex; justify-content: space-between; align-items: center; padding: 0 5px 0 3px; background: linear-gradient(#fff, #f1efec); border: 1px solid #d0cec9; border-radius: 3px; }
.axis { width: 12px; flex: none; text-align: center; }
.r2 .axis { margin-left: 1px; }
.spin { height: 20px; flex: none; display: flex; justify-content: space-between; align-items: center; padding-left: 4px; margin-left: 2px; margin-right: 5px; background: #fff; border: 1px solid #d0cec9; border-radius: 3px; }
.w95 { width: 95px; } .w94 { width: 94px; }
.spinb { height: 18px; width: 13px; padding-top: 3px; border-left: 1px solid #e2e0dc; background: #f3f2f0; }

.center { flex: 1; min-width: 0; display: flex; flex-direction: column; }
.viewport { height: 600px; flex: none; }
.scene { width: 100%; height: 100%; display: block; }
.fps { font: 11px "DejaVu Sans Mono", monospace; letter-spacing: 1.800px; fill: #e0e03c; }
.axlab { font: 6px "DejaVu Sans", sans-serif; fill: #222; }
.doctabs { height: 27px; flex: none; display: flex; align-items: flex-start; }
.dtab { height: 24px; width: 114px; display: flex; align-items: center; padding-left: 6px; background: #efedea; border: 1px solid #d5d3ce; border-top: 0; border-radius: 0 0 3px 3px; flex: none; white-space: nowrap; }
.dtab.on { height: 27px; width: 135px; background: #fbfafa; padding-left: 5px; }
.tabic { width: 14px; height: 14px; flex: none; }
.dname { margin-left: 7px; }
.dtab.on .dname { margin-left: 7px; }
.tabx { width: 12px; height: 12px; margin-left: auto; margin-right: 8px; }

.console { height: 92px; flex: none; display: flex; flex-direction: column; }
.conbody { height: 51px; flex: none; display: flex; gap: 3px; }
.conrows { flex: 1; background: #fff; border-top: 1px solid #cfcdc8; border-bottom: 1px solid #cfcdc8; border-right: 1px solid #cfcdc8; padding: 1px 0 0 5px; line-height: 14.500px; color: #333; }
.con i { color: #aaa; margin-right: 2px; letter-spacing: 1px; }
.con em { color: #aaa; }
.con b { color: #e3202c; font-weight: 400; }
.vscroll.con-v { width: 10px; margin-right: 1px; }
.hscroll { height: 12px; flex: none; margin: 3px 12px 0 1px; display: flex; align-items: stretch; background: #eceae7; border: 1px solid #c9c7c2; border-radius: 6px; }
.hscroll .lf, .hscroll .rt { width: 10px; flex: none; display: flex; align-items: center; justify-content: center; }
.hscroll .lf::after { content: ""; border: 2px solid transparent; border-right: 3px solid #666; border-left: 0; }
.hscroll .rt::after { content: ""; border: 3px solid transparent; border-left: 4px solid #444; border-right: 0; }
.hthumb { width: 1516px; flex: none; background: linear-gradient(#f7f6f4, #e9e7e3); border: 1px solid #aaa8a3; border-radius: 6px; margin: -1px 0; }
.htrack { flex: 1; }
.status { height: 23px; flex: none; display: flex; align-items: center; justify-content: space-between; padding: 0 2px 0 5px; color: #55534f; }
u { text-underline-offset: 2px; }
```
